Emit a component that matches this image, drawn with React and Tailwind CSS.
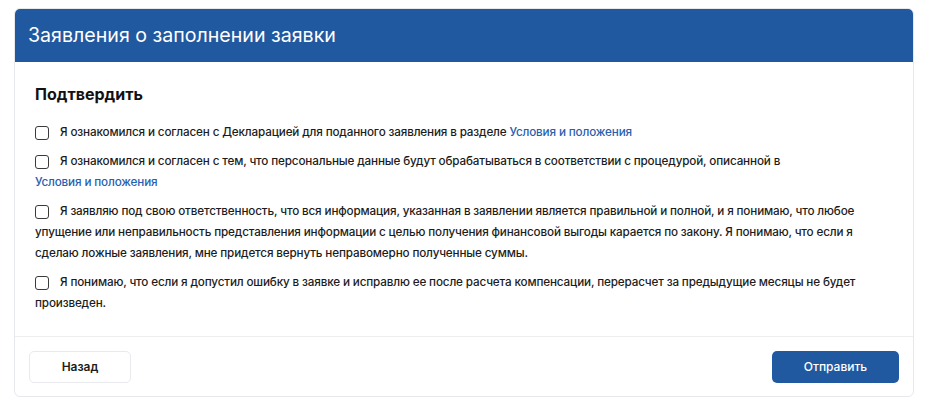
import React from "react";

function Box() {
  return (
    <span className="mt-[1px] inline-block h-[14px] w-[14px] shrink-0 rounded-[3px] border-[1.5px] border-[#3a3a3a] bg-white" />
  );
}

function Link({ children }) {
  return <span className="whitespace-nowrap text-[#2760b0]">{children}</span>;
}

function Row({ children }) {
  return (
    <div>
      <span className="inline-flex h-[21px] items-center align-top">
        <Box />
      </span>
      <span className="ml-[11px]">{children}</span>
    </div>
  );
}

export default function App() {
  return (
    <div className="min-h-[415px] w-[927px] bg-white pt-[8px] pl-[14px] font-['Inter','Liberation_Sans',sans-serif]">
      <div className="w-[900px] overflow-hidden rounded-[6px] border border-[#e6e8eb] bg-white">
        <div className="flex h-[53px] items-center bg-[#2159a1] pl-[13px] text-[19.6px] text-white">
          Заявления о заполнении заявки
        </div>
        <div className="pt-[21px] pr-[40px] pb-[22px] pl-[20px]">
          <h2 className="text-[16px] font-bold leading-[22px] text-[#111]">Подтвердить</h2>
          <div className="mt-[17px] flex flex-col gap-[8px] text-[11.7px] font-medium leading-[21px] tracking-[-0.15px] text-[#1c1c1c]">
            <Row>
              Я ознакомился и согласен с Декларацией для поданного заявления в разделе{" "}
              <Link>Условия и положения</Link>
            </Row>
            <Row>
              Я ознакомился и согласен с тем, что персональные данные будут обрабатываться в соответствии с процедурой, описанной в{" "}
              <Link>Условия и положения</Link>
            </Row>
            <Row>
              Я заявляю под свою ответственность, что вся информация, указанная в заявлении является правильной и полной, и я понимаю, что любое упущение или неправильность представления информации с целью получения финансовой выгоды карается по закону. Я понимаю, что если я сделаю ложные заявления, мне придется вернуть неправомерно полученные суммы.
            </Row>
            <Row>
              Я понимаю, что если я допустил ошибку в заявке и исправлю ее после расчета компенсации, перерасчет за предыдущие месяцы не будет произведен.
            </Row>
          </div>
        </div>
        <div className="flex items-center justify-between border-t border-[#eceef0] px-[14px] pt-[14px] pb-[13px]">
          <button className="h-[32px] w-[102px] rounded-[5px] border border-[#e8eaed] bg-white text-[12px] font-semibold text-[#1c1c1c]">
            Назад
          </button>
          <button className="h-[32px] w-[127px] rounded-[5px] bg-[#2159a1] text-[12px] font-medium text-white">
            Отправить
          </button>
        </div>
      </div>
    </div>
  );
}
